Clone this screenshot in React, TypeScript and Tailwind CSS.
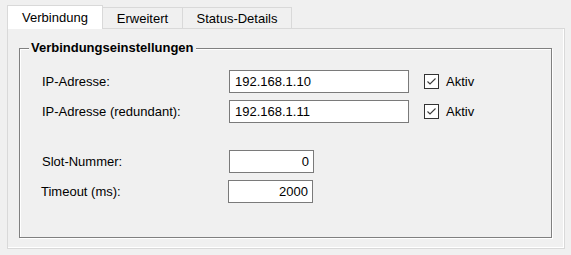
import React from "react";

const Check = () => (
  <div className="w-[15px] h-[15px] border border-[#333333] bg-white flex items-center justify-center">
    <svg width="13" height="13" viewBox="0 0 13 13">
      <path d="M2.5 6.5 L5 9 L10.5 3.5" fill="none" stroke="#3c3c3c" strokeWidth="1.1" />
    </svg>
  </div>
);

const Field = ({ value, w, right }: { value: string; w: string; right?: boolean }) => (
  <div
    className={`${w} h-[23px] border border-[#7a7a7a] bg-white flex items-center ${
      right ? "justify-end pr-[4px]" : "pl-[5px]"
    }`}
  >
    <span>{value}</span>
  </div>
);

export default function App() {
  return (
    <div
      className="w-[571px] h-[255px] bg-[#f0f0f0] text-black text-[13px] leading-[16px] overflow-hidden"
      style={{ fontFamily: '"Liberation Sans", Arial, sans-serif' }}
    >
      {/* Tabs */}
      <div className="flex items-end pl-[7px] pt-[5px] h-[28px]">
        <div className="relative z-10 -mb-px w-[96px] h-[24px] bg-white border border-b-0 border-[#d9d9d9] flex items-center justify-center">
          Verbindung
        </div>
        <div className="w-[80px] h-[21px] bg-[#f0f0f0] border border-l-0 border-b-0 border-[#d9d9d9] flex items-center justify-center pt-[1px]">
          Erweitert
        </div>
        <div className="w-[109px] h-[21px] bg-[#f0f0f0] border border-l-0 border-b-0 border-[#d9d9d9] flex items-center justify-center pt-[1px]">
          Status-Details
        </div>
      </div>

      {/* Panel */}
      <div className="ml-[7px] w-[558px] h-[221px] border border-[#d9d9d9] shadow-[inset_-1px_-1px_0_#ffffff] pt-[19px] pl-[11px]">
        {/* Group box */}
        <div className="relative w-[533px] h-[190px] border border-[#808080] shadow-[1px_1px_0_#ffffff,inset_1px_1px_0_#ffffff]">
          <span className="absolute left-[9px] top-[-9px] px-[2px] bg-[#f0f0f0] font-bold leading-[16px]">
            Verbindungseinstellungen
          </span>

          <div className="flex flex-col pt-[21px] pl-[22px]">
            <div className="flex items-center h-[23px]">
              <div className="w-[187px] pt-[1px]">IP-Adresse:</div>
              <Field value="192.168.1.10" w="w-[180px]" />
              <div className="ml-[15px]"><Check /></div>
              <span className="ml-[7px]">Aktiv</span>
            </div>
            <div className="flex items-center h-[23px] mt-[7px]">
              <div className="w-[187px] pt-[1px]">IP-Adresse (redundant):</div>
              <Field value="192.168.1.11" w="w-[180px]" />
              <div className="ml-[15px]"><Check /></div>
              <span className="ml-[7px]">Aktiv</span>
            </div>
            <div className="flex items-center h-[23px] mt-[27px]">
              <div className="w-[187px] pt-[1px]">Slot-Nummer:</div>
              <Field value="0" w="w-[85px]" right />
            </div>
            <div className="flex items-center h-[23px] mt-[7px]">
              <div className="w-[187px] pt-[1px] -ml-[1px]">Timeout (ms):</div>
              <Field value="2000" w="w-[85px]" right />
            </div>
          </div>
        </div>
      </div>
    </div>
  );
}
